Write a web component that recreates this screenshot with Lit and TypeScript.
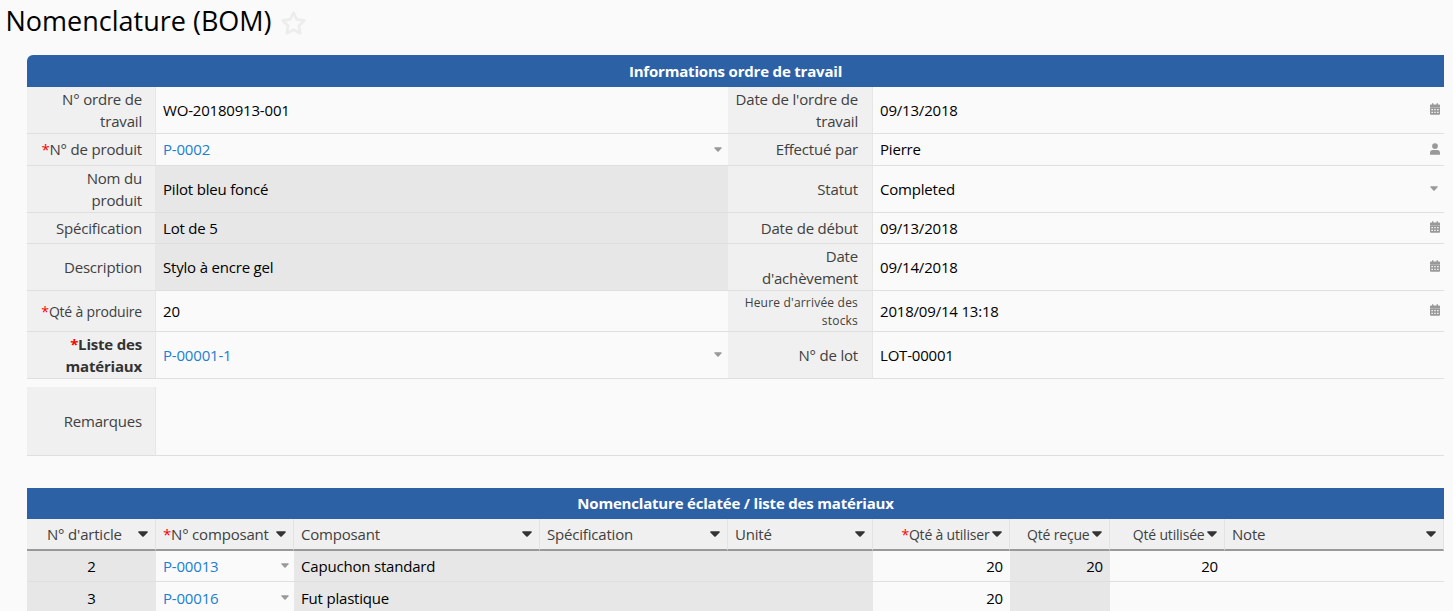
import {LitElement, html, css, nothing} from 'lit';
import {customElement, property} from 'lit/decorators.js';
import {classMap} from 'lit/directives/class-map.js';

type Icon = 'calendar' | 'user' | 'caret';

interface Field {
  label: string;
  value?: string;
  required?: boolean;
  readonly?: boolean;
  link?: boolean;
  bold?: boolean;
  size?: 'medium' | 'small';
  icon?: Icon;
}

interface Column {
  label: string;
  align?: 'center' | 'right';
  required?: boolean;
  readonly?: boolean;
  link?: boolean;
}

const FIELDS: [Field, Field][] = [
  [
    {label: 'N° ordre de\ntravail', value: 'WO-20180913-001'},
    {label: "Date de l'ordre de\ntravail", value: '09/13/2018', icon: 'calendar'},
  ],
  [
    {label: 'N° de produit', value: 'P-0002', required: true, link: true, icon: 'caret'},
    {label: 'Effectué par', value: 'Pierre', icon: 'user'},
  ],
  [
    {label: 'Nom du\nproduit', value: 'Pilot bleu foncé', readonly: true},
    {label: 'Statut', value: 'Completed', icon: 'caret'},
  ],
  [
    {label: 'Spécification', value: 'Lot de 5', readonly: true},
    {label: 'Date de début', value: '09/13/2018', icon: 'calendar'},
  ],
  [
    {label: 'Description', value: 'Stylo à encre gel', readonly: true},
    {label: "Date\nd'achèvement", value: '09/14/2018', icon: 'calendar'},
  ],
  [
    {label: 'Qté à produire', value: '20', required: true, size: 'medium'},
    {label: "Heure d'arrivée des\nstocks", value: '2018/09/14 13:18', size: 'small', icon: 'calendar'},
  ],
  [
    {label: 'Liste des\nmatériaux', value: 'P-00001-1', required: true, bold: true, link: true, icon: 'caret'},
    {label: 'N° de lot', value: 'LOT-00001'},
  ],
];

const COLUMNS: Column[] = [
  {label: "N° d'article", align: 'center', readonly: true},
  {label: 'N° composant', required: true, link: true},
  {label: 'Composant', readonly: true},
  {label: 'Spécification', readonly: true},
  {label: 'Unité', readonly: true},
  {label: 'Qté à utiliser', align: 'right', required: true},
  {label: 'Qté reçue', align: 'right', readonly: true},
  {label: 'Qté utilisée', align: 'right'},
  {label: 'Note'},
];

const ROWS = [
  ['2', 'P-00013', 'Capuchon standard', '', '', '20', '20', '20', ''],
  ['3', 'P-00016', 'Fut plastique', '', '', '20', '', '', ''],
];

@customElement('bom-icon')
export class BomIcon extends LitElement {
  static override styles = css`
    :host {
      display: flex;
    }
    svg {
      display: block;
      fill: currentColor;
    }
  `;

  @property()
  name: Icon | 'sort' = 'caret';

  override render() {
    switch (this.name) {
      case 'calendar':
        return html`<svg width="10" height="12" viewBox="0 0 10 12">
          <path
            fill-rule="evenodd"
            d="M2 0.3h1.4v1.3h3.2V0.3H8v1.3h1.2a.8.8 0 0 1 .8.8V4H0V2.4a.8.8 0 0 1 .8-.8H2zM0 4.3h10v6.6a.8.8 0 0 1-.8.8H.8a.8.8 0 0 1-.8-.8zM1.4 6v1.3h1.5V6zM4.3 6v1.3h1.4V6zM7.1 6v1.3h1.5V6zM1.4 8.8v1.3h1.5V8.8zM4.3 8.8v1.3h1.4V8.8zM7.1 8.8v1.3h1.5V8.8z"
          />
        </svg>`;
      case 'user':
        return html`<svg width="10" height="12" viewBox="0 0 10 12">
          <circle cx="5" cy="3.1" r="2.9" />
          <path d="M0 11.8V10a2.9 2.9 0 0 1 2.9-2.9h4.2A2.9 2.9 0 0 1 10 10v1.8z" />
        </svg>`;
      case 'sort':
        return html`<svg width="10" height="6" viewBox="0 0 10 6">
          <path d="M.9.2h8.2c.7 0 1 .8.5 1.3L5.7 5.4a1 1 0 0 1-1.4 0L.4 1.5C-.1 1 .2.2.9.2z" />
        </svg>`;
      default:
        return html`<svg width="8" height="5" viewBox="0 0 8 5">
          <path d="M.9.2h6.2c.6 0 .9.7.5 1.1L4.6 4.4a.8.8 0 0 1-1.2 0L.4 1.3C0 .9.3.2.9.2z" />
        </svg>`;
    }
  }
}

@customElement('app-root')
export class AppRoot extends LitElement {
  static override styles = css`
    :host {
      display: block;
      box-sizing: border-box;
      width: 1453px;
      height: 611px;
      overflow: hidden;
      background: #fafafa;
      color: #000;
      font: 15px/22px 'Open Sans', sans-serif;
      letter-spacing: -0.19px;
    }
    * {
      box-sizing: border-box;
    }
    header {
      display: flex;
      align-items: center;
      gap: 9px;
      height: 55px;
      padding: 0 0 13px 5.5px;
    }
    h1 {
      margin: 0;
      font-size: 27px;
      line-height: 42px;
      font-weight: 400;
      letter-spacing: 0;
    }
    .star {
      display: block;
      margin-top: 3px;
      fill: none;
      stroke: #ededed;
      stroke-width: 2.8;
      stroke-linejoin: round;
    }
    main {
      width: 1417px;
      margin-left: 27px;
    }
    h2 {
      display: flex;
      align-items: center;
      justify-content: center;
      height: 31px;
      margin: 0;
      padding-bottom: 1px;
      background: #2d61a6;
      color: #fff;
      font-size: 15px;
      font-weight: 700;
    }
    .form h2 {
      height: 32px;
      padding-bottom: 0;
      border-top-left-radius: 6px;
    }
    .fields {
      display: grid;
      grid-template-columns: 129px 572px 145px 571px;
      grid-template-rows: 47px 32px 47px 31px 47px 41px 47px;
    }
    .remarks {
      display: grid;
      grid-template-columns: 129px 1288px;
      height: 69px;
      margin: 8px 0 32px;
    }
    .label,
    .value {
      display: flex;
      align-items: center;
      border-bottom: 1px solid #dfdfdf;
    }
    .label {
      justify-content: flex-end;
      padding-right: 14px;
      border-right: 1px solid #e6e6e6;
      background: #f0f0f0;
      color: #404040;
      text-align: right;
      white-space: pre-line;
    }
    .label:nth-child(4n + 1) {
      padding-right: 13px;
    }
    .label.bold {
      color: #333;
      font-weight: 700;
    }
    .label.medium {
      padding-top: 2px;
      font-size: 14px;
    }
    .label.small {
      padding-top: 2px;
      font-size: 12px;
      line-height: 18px;
      letter-spacing: 0.2px;
    }
    .required {
      color: #f00;
    }
    .value {
      justify-content: space-between;
      padding: 0 4px 0 7px;
    }
    .value bom-icon {
      color: #999;
      padding-bottom: 3px;
    }
    .value .caret {
      padding: 0 2px 1px 0;
    }
    .value .user {
      padding-bottom: 1px;
    }
    .readonly {
      background: #e7e7e7;
    }
    .link {
      color: #1a80d0;
    }
    .value .link,
    .label:nth-child(5),
    .label:nth-child(7),
    .value:nth-child(8) {
      padding-bottom: 1px;
    }
    .grid {
      display: grid;
      grid-template-columns: 129px 138px 246px 188px 145px 137px 100px 115px 219px;
      grid-template-rows: 32px 31px 33px;
    }
    .head,
    .cell {
      display: flex;
      align-items: center;
      justify-content: space-between;
      padding: 0 7px;
    }
    .head {
      border-right: 1px solid #e3e3e3;
      border-bottom: 2px solid #999;
      background: #f0f0f0;
      color: #404040;
      white-space: nowrap;
    }
    .head bom-icon {
      color: #333;
    }
    .head.center {
      padding-left: 20px;
    }
    .head.right {
      justify-content: flex-end;
      gap: 2.5px;
      font-size: 14px;
    }
    .head.right span {
      padding-top: 1px;
    }
    .head.right .required {
      padding-top: 0;
    }
    .cell {
      border-bottom: 1px solid #dfdfdf;
    }
    .cell bom-icon {
      padding-bottom: 1px;
      margin-right: -2px;
      color: #999;
    }
    .cell.center {
      justify-content: center;
    }
    .cell.right {
      justify-content: flex-end;
    }
  `;

  private _label(field: Field) {
    const classes = {
      label: true,
      bold: !!field.bold,
      medium: field.size === 'medium',
      small: field.size === 'small',
    };
    return html`<div class=${classMap(classes)}><span>${this._star(field.required)}${field.label}</span></div>`;
  }

  private _value(field: Field) {
    return html`<div class=${classMap({value: true, readonly: !!field.readonly})}>
      <span class=${classMap({link: !!field.link})}>${field.value}</span>
      ${field.icon ? html`<bom-icon class=${field.icon} name=${field.icon}></bom-icon>` : nothing}
    </div>`;
  }

  private _star(required?: boolean) {
    return required ? html`<span class="required">*</span>` : nothing;
  }

  private _head(column: Column) {
    return html`<div class="head ${column.align ?? ''}">
      <span>${this._star(column.required)}${column.label}</span>
      <bom-icon name="sort"></bom-icon>
    </div>`;
  }

  private _cell(text: string, column: Column) {
    return html`<div class="cell ${column.align ?? ''} ${column.readonly ? 'readonly' : ''}">
      <span class=${classMap({link: !!column.link})}>${text}</span>
      ${column.link ? html`<bom-icon name="caret"></bom-icon>` : nothing}
    </div>`;
  }

  override render() {
    return html`
      <header>
        <h1>Nomenclature (BOM)</h1>
        <svg class="star" width="25" height="24" viewBox="0 0 25 24">
          <path d="M12.5 1.6l3.3 6.8 7.5 1.1-5.4 5.2 1.3 7.5-6.7-3.5-6.7 3.5 1.3-7.5L1.7 9.5l7.5-1.1z" />
        </svg>
      </header>
      <main>
        <section class="form">
          <h2>Informations ordre de travail</h2>
          <div class="fields">
            ${FIELDS.map((pair) => pair.map((field) => [this._label(field), this._value(field)]))}
          </div>
          <div class="remarks">${this._label({label: 'Remarques'})}${this._value({label: ''})}</div>
        </section>
        <section>
          <h2>Nomenclature éclatée / liste des matériaux</h2>
          <div class="grid">
            ${COLUMNS.map((column) => this._head(column))}
            ${ROWS.map((row) => row.map((text, i) => this._cell(text, COLUMNS[i])))}
          </div>
        </section>
      </main>
    `;
  }
}

declare global {
  interface HTMLElementTagNameMap {
    'bom-icon': BomIcon;
    'app-root': AppRoot;
  }
}
